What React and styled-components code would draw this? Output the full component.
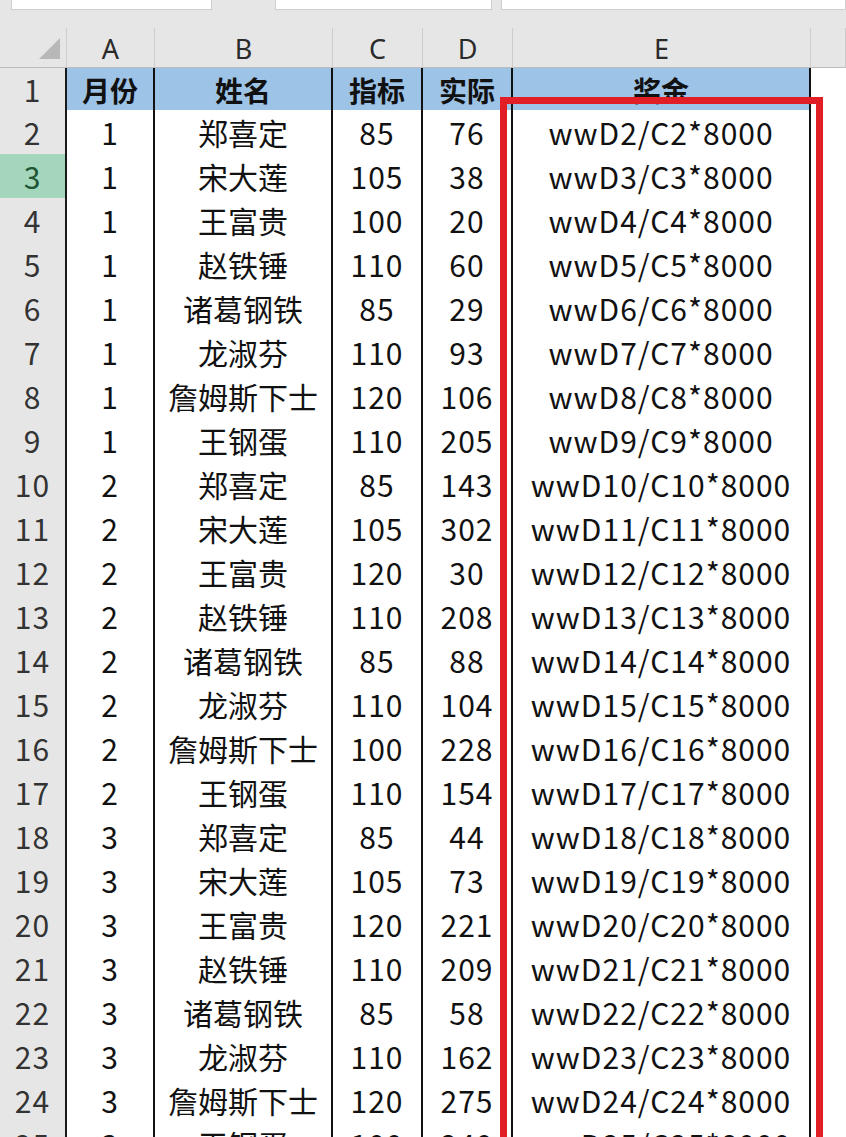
import React from 'react';
import styled, { createGlobalStyle } from 'styled-components';

const GlobalStyle = createGlobalStyle`
  body {
    margin: 0;
    background: #e6e6e6;
    font-family: "Noto Sans CJK SC", "Noto Sans", sans-serif;
  }
`;

const COLUMNS = '67px 88px 178px 90px 90px 298px 1fr';

const Page = styled.div`
  width: 846px;
  height: 1137px;
  overflow: hidden;
  background: #e6e6e6;
`;

const TopStrip = styled.div`
  height: 28px;
  display: flex;
  align-items: flex-start;
  padding-left: 11px;
  box-sizing: border-box;
`;

const InputBox = styled.div`
  height: 10px;
  background: #fff;
  border: 1px solid #cfcfcf;
  border-top: none;
  box-sizing: border-box;
  width: ${(p) => (p.$width ? `${p.$width}px` : 'auto')};
  flex: ${(p) => (p.$width ? 'none' : '1')};
  margin-right: ${(p) => p.$gap || 0}px;
`;

const Sheet = styled.div`
  position: relative;
`;

const Row = styled.div`
  display: grid;
  grid-template-columns: ${COLUMNS};
  height: ${(p) => p.$height}px;
`;

const ColHead = styled.div`
  position: relative;
  background: #e6e6e6;
  border-right: 1px solid #cdcdcd;
  border-bottom: 1px solid #bcbcbc;
  display: flex;
  align-items: center;
  justify-content: center;
  font-family: "Noto Sans", "Liberation Sans", sans-serif;
  font-size: 27px;
  color: #2a2a2a;
  padding-top: 2px;
  box-sizing: border-box;
`;

const Corner = styled.div`
  position: absolute;
  right: 6px;
  bottom: 8px;
  width: 0;
  height: 0;
  border-left: 21px solid transparent;
  border-bottom: 21px solid #b8b8b8;
`;

const RowHead = styled.div`
  background: ${(p) => (p.$selected ? '#a3d6ba' : '#e6e6e6')};
  color: ${(p) => (p.$selected ? '#1e5636' : '#333')};
  border-right: 2px solid #1a1a1a;
  border-bottom: 1px solid #cbcbcb;
  display: flex;
  align-items: center;
  justify-content: center;
  font-size: 30px;
  letter-spacing: 1px;
  padding-bottom: 3px;
  box-sizing: border-box;
`;

const Cell = styled.div`
  background: ${(p) => (p.$title ? '#9dc3e6' : '#fff')};
  border-right: 2px solid #111;
  border-bottom: 2px solid #111;
  display: flex;
  align-items: center;
  justify-content: center;
  font-size: ${(p) => (p.$title ? 28 : 30)}px;
  font-weight: ${(p) => (p.$title ? 700 : 400)};
  letter-spacing: ${(p) => (p.$latin ? '1px' : '0')};
  padding-bottom: ${(p) => (p.$title ? 0 : 3)}px;
  color: #111;
  white-space: nowrap;
  overflow: hidden;
  box-sizing: border-box;
`;

const Spare = styled.div`
  background: #fff;
  border-bottom: 1px solid #d6d6d6;
  box-sizing: border-box;
`;

const Highlight = styled.div`
  position: absolute;
  left: 500px;
  top: 69px;
  width: 323px;
  height: 1200px;
  border: 7px solid #e11d25;
  border-bottom: none;
  box-sizing: border-box;
  pointer-events: none;
`;

const names = ['郑喜定', '宋大莲', '王富贵', '赵铁锤', '诸葛钢铁', '龙淑芬', '詹姆斯下士', '王钢蛋'];

const rows = [
  [1, 85, 76], [1, 105, 38], [1, 100, 20], [1, 110, 60], [1, 85, 29], [1, 110, 93], [1, 120, 106], [1, 110, 205],
  [2, 85, 143], [2, 105, 302], [2, 120, 30], [2, 110, 208], [2, 85, 88], [2, 110, 104], [2, 100, 228], [2, 110, 154],
  [3, 85, 44], [3, 105, 73], [3, 120, 221], [3, 110, 209], [3, 85, 58], [3, 110, 162], [3, 120, 275], [3, 100, 240],
].map(([month, target, actual], i) => ({
  n: i + 2,
  month,
  name: names[i % 8],
  target,
  actual,
}));

const App = () => (
  <Page>
    <GlobalStyle />
    <TopStrip>
      <InputBox $width={201} $gap={63} />
      <InputBox $width={217} $gap={9} />
      <InputBox />
    </TopStrip>
    <Sheet>
      <Row $height={39}>
        <ColHead>
          <Corner />
        </ColHead>
        {['A', 'B', 'C', 'D', 'E', ''].map((l, i) => (
          <ColHead key={i}>{l}</ColHead>
        ))}
      </Row>
      <Row $height={43}>
        <RowHead>1</RowHead>
        <Cell $title>月份</Cell>
        <Cell $title>姓名</Cell>
        <Cell $title>指标</Cell>
        <Cell $title>实际</Cell>
        <Cell $title>奖金</Cell>
        <Spare />
      </Row>
      {rows.map((r) => (
        <Row key={r.n} $height={44}>
          <RowHead $selected={r.n === 3}>{r.n}</RowHead>
          <Cell $latin>{r.month}</Cell>
          <Cell>{r.name}</Cell>
          <Cell $latin>{r.target}</Cell>
          <Cell $latin>{r.actual}</Cell>
          <Cell $latin>{`wwD${r.n}/C${r.n}*8000`}</Cell>
          <Spare />
        </Row>
      ))}
      <Highlight />
    </Sheet>
  </Page>
);

export default App;
